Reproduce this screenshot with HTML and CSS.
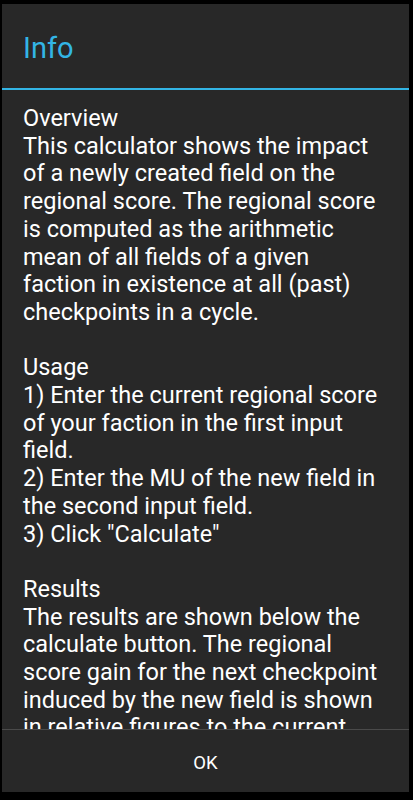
FILE: index.html
```html
<!DOCTYPE html>
<html lang="en">

<head>
    <meta charset="UTF-8">
    <meta name="viewport" content="width=device-width, initial-scale=1.0">
    <title>Info</title>
    <link rel="stylesheet" href="styles.css">
</head>

<body>
    <div class="dialog">
        <div class="dialog-title">Info</div>
        <div class="title-divider"></div>

        <div class="dialog-body">
            <p>Overview<br>
                This calculator shows the impact of a newly created field on the regional score. The regional score
                is computed as the arithmetic mean of all fields of a given faction in existence at all (past)
                checkpoints in a cycle.</p>

            <p>Usage<br>
                1) Enter the current regional score of your faction in the first input field.<br>
                2) Enter the MU of the new field in the second input field.<br>
                3) Click "Calculate"</p>

            <p>Results<br>
                The results are shown below the calculate button. The regional score gain for the next checkpoint
                induced by the new field is shown in relative figures to the current score.</p>
        </div>

        <div class="dialog-buttons">
            <div class="button">OK</div>
        </div>
    </div>
</body>

</html>
```

FILE: styles.css
```css
body {
    margin: 0;
    background-color: #000;
    font-family: Roboto, "Noto Sans", sans-serif;
}

.dialog {
    margin: 4px 4px 0 2px;
    height: 788px;
    background: #282828;
    display: flex;
    flex-direction: column;
    box-sizing: border-box;
}

.dialog-title {
    height: 84px;
    display: flex;
    align-items: center;
    padding-left: 21px;
    padding-top: 3px;
    box-sizing: border-box;
    font-size: 29px;
    color: #33b5e5;
}

.title-divider {
    height: 2px;
    background: #33b5e5;
}

.dialog-body {
    flex: 1;
    overflow: hidden;
    padding: 15px 23px 0 21px;
    font-size: 23.5px;
    line-height: 27.7px;
    color: #fff;
}

.dialog-body p {
    margin: 0 0 27.7px 0;
}

.dialog-buttons {
    height: 62px;
    border-top: 1px solid #4a4a4a;
    display: flex;
}

.button {
    flex: 1;
    display: flex;
    justify-content: center;
    align-items: center;
    padding-top: 4px;
    font-size: 18.5px;
    color: #fff;
}
```
